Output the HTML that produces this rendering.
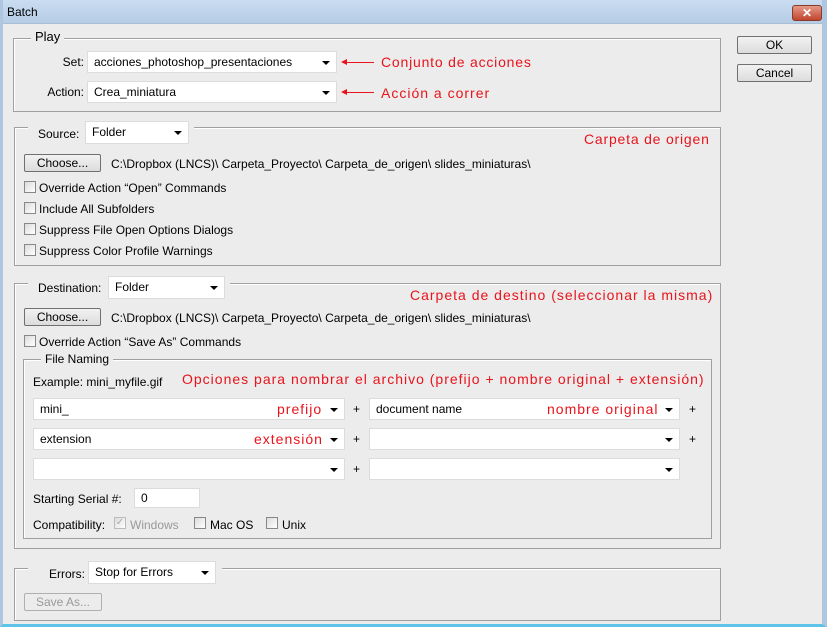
<!DOCTYPE html><html><head><meta charset="utf-8"><style>
*{box-sizing:border-box;margin:0;padding:0}
body{width:827px;height:627px;overflow:hidden;background:#ececec;font:12px "Liberation Sans",sans-serif;color:#000;position:relative}
.a{position:absolute;white-space:nowrap}
.tb{left:0;top:0;width:827px;height:24px;background:linear-gradient(#c9dcf0,#b6cde6);border-bottom:1px solid #a9bfd6}
.win{left:0;top:0;width:827px;height:627px;border-left:3px solid #aec6e0;border-right:5px solid #aec6e0;border-bottom:3px solid #5ec5e8}
.g{border:1px solid #a0a0a0;box-shadow:inset 1px 1px 0 #fff}
.lg{background:#ececec;padding:0 4px}
.sel,.inp{background:#fff;border:1px solid #dcdcdc;height:22px;line-height:20px;padding-left:6px}
.sel:after{content:"";position:absolute;right:6px;top:9px;border:4px solid transparent;border-top:4px solid #000;border-bottom:0}
.btn{border:1px solid #707070;border-radius:2px;background:linear-gradient(#f2f2f2,#dcdcdc);text-align:center;line-height:16px;height:18px}
.cb{width:12px;height:12px;border:1px solid #888;background:linear-gradient(135deg,#dcdcdc,#fff)}
.r{color:#e8141c;font-size:14px;letter-spacing:1px}
.rt{text-align:right}
</style></head><body>
<div class="a tb"></div>
<div class="a" style="left:7px;top:5px;font-size:12px">Batch</div>
<div class="a" style="left:792px;top:5px;width:30px;height:16px;border:1px solid #8a3a2a;border-radius:3px;background:linear-gradient(#e49a88,#c0452e);color:#fff;text-align:center;font-weight:bold;line-height:14px">✕</div>

<div class="a btn" style="left:737px;top:36px;width:75px">OK</div>
<div class="a btn" style="left:737px;top:64px;width:75px">Cancel</div>

<div class="a g" style="left:13px;top:38px;width:708px;height:74px"></div>
<div class="a lg" style="left:31px;top:29px;font-size:13px">Play</div>
<div class="a rt" style="left:30px;top:55px;width:54px">Set:</div>
<div class="a sel" style="left:87px;top:51px;width:250px">acciones_photoshop_presentaciones</div>
<div class="a rt" style="left:30px;top:85px;width:54px">Action:</div>
<div class="a sel" style="left:87px;top:81px;width:250px">Crea_miniatura</div>
<div class="a" style="left:344px;top:62px;width:30px;height:1px;background:#e8141c"></div>
<div class="a" style="left:341px;top:59px;border:3px solid transparent;border-right:6px solid #e8141c;border-left:0"></div>
<div class="a" style="left:344px;top:92px;width:30px;height:1px;background:#e8141c"></div>
<div class="a" style="left:341px;top:89px;border:3px solid transparent;border-right:6px solid #e8141c;border-left:0"></div>
<div class="a r" style="left:381px;top:54px;letter-spacing:0.8px">Conjunto de acciones</div>
<div class="a r" style="left:381px;top:85px">Acción a correr</div>

<div class="a g" style="left:14px;top:127px;width:707px;height:139px"></div>
<div class="a lg" style="left:28px;top:118px;width:166px;height:28px"></div>
<div class="a" style="left:38px;top:127px">Source:</div>
<div class="a sel" style="left:85px;top:121px;width:104px;height:23px">Folder</div>
<div class="a r" style="left:584px;top:131px;letter-spacing:0.8px">Carpeta de origen</div>
<div class="a btn" style="left:24px;top:154px;width:77px">Choose...</div>
<div class="a" style="left:111px;top:157px">C:\Dropbox (LNCS)\ Carpeta_Proyecto\ Carpeta_de_origen\ slides_miniaturas\</div>
<div class="a cb" style="left:24px;top:181px"></div><div class="a" style="left:39px;top:181px">Override Action “Open” Commands</div>
<div class="a cb" style="left:24px;top:202px"></div><div class="a" style="left:39px;top:202px">Include All Subfolders</div>
<div class="a cb" style="left:24px;top:223px"></div><div class="a" style="left:39px;top:223px">Suppress File Open Options Dialogs</div>
<div class="a cb" style="left:24px;top:244px"></div><div class="a" style="left:39px;top:244px">Suppress Color Profile Warnings</div>

<div class="a g" style="left:14px;top:283px;width:707px;height:266px"></div>
<div class="a lg" style="left:28px;top:274px;width:202px;height:28px"></div>
<div class="a" style="left:38px;top:281px">Destination:</div>
<div class="a sel" style="left:108px;top:276px;width:117px;height:23px">Folder</div>
<div class="a r" style="left:410px;top:287px">Carpeta de destino (seleccionar la misma)</div>
<div class="a btn" style="left:24px;top:308px;width:77px">Choose...</div>
<div class="a" style="left:111px;top:311px">C:\Dropbox (LNCS)\ Carpeta_Proyecto\ Carpeta_de_origen\ slides_miniaturas\</div>
<div class="a cb" style="left:24px;top:335px"></div><div class="a" style="left:39px;top:335px">Override Action “Save As” Commands</div>

<div class="a g" style="left:23px;top:359px;width:689px;height:180px"></div>
<div class="a lg" style="left:41px;top:352px">File Naming</div>
<div class="a" style="left:33px;top:375px">Example: mini_myfile.gif</div>
<div class="a r" style="left:182px;top:371px">Opciones para nombrar el archivo (prefijo + nombre original + extensión)</div>

<div class="a sel" style="left:33px;top:398px;width:312px">mini_</div>
<div class="a r" style="left:277px;top:401px">prefijo</div>
<div class="a" style="left:353px;top:402px">+</div>
<div class="a sel" style="left:369px;top:398px;width:311px">document name</div>
<div class="a r" style="left:547px;top:401px">nombre original</div>
<div class="a" style="left:689px;top:402px">+</div>

<div class="a sel" style="left:33px;top:428px;width:312px">extension</div>
<div class="a r" style="left:254px;top:431px">extensión</div>
<div class="a" style="left:353px;top:432px">+</div>
<div class="a sel" style="left:369px;top:428px;width:311px"></div>
<div class="a" style="left:689px;top:432px">+</div>

<div class="a sel" style="left:33px;top:458px;width:312px"></div>
<div class="a" style="left:353px;top:462px">+</div>
<div class="a sel" style="left:369px;top:458px;width:311px"></div>

<div class="a" style="left:33px;top:492px">Starting Serial #:</div>
<div class="a inp" style="left:134px;top:488px;width:66px;height:20px;line-height:18px">0</div>
<div class="a" style="left:33px;top:518px">Compatibility:</div>
<div class="a cb" style="left:114px;top:517px;border-color:#bbb;font-size:10px;line-height:10px;color:#aaa;text-align:center">✓</div>
<div class="a" style="left:130px;top:518px;color:#999">Windows</div>
<div class="a cb" style="left:194px;top:517px"></div><div class="a" style="left:210px;top:518px">Mac OS</div>
<div class="a cb" style="left:266px;top:517px"></div><div class="a" style="left:282px;top:518px">Unix</div>

<div class="a g" style="left:14px;top:568px;width:707px;height:53px"></div>
<div class="a lg" style="left:28px;top:559px;width:194px;height:28px"></div>
<div class="a" style="left:49px;top:567px">Errors:</div>
<div class="a sel" style="left:88px;top:561px;width:128px;height:23px">Stop for Errors</div>
<div class="a btn" style="left:24px;top:593px;width:78px;border-color:#b0b0b0;color:#999;background:#ececec">Save As...</div>

<div class="a win"></div>
</body></html>
